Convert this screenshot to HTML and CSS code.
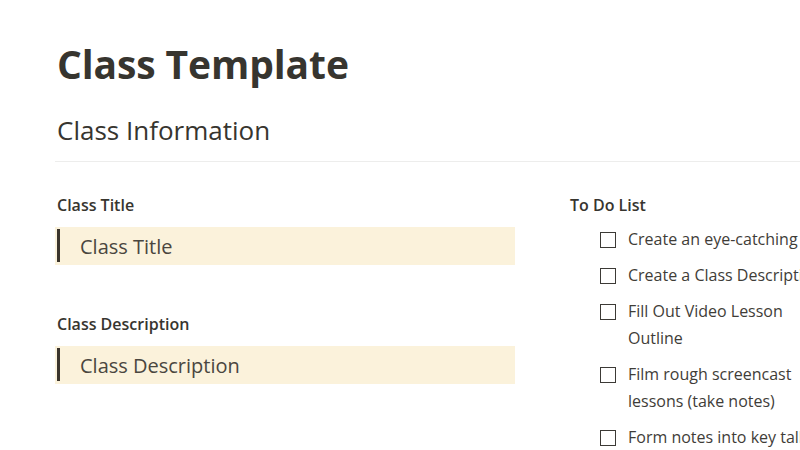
FILE: index.html
```html
<!DOCTYPE html>
<html>
<head>
<meta charset="utf-8">
<link rel="stylesheet" href="styles.css">
</head>
<body>
<div class="page">
  <h1 class="title">Class Template</h1>
  <h2 class="section">Class Information</h2>
  <div class="columns">
    <div class="left">
      <div class="label">Class Title</div>
      <div class="callout"><div class="callout-inner">Class Title</div></div>
      <div class="label label-gap">Class Description</div>
      <div class="callout"><div class="callout-inner">Class Description</div></div>
    </div>
    <div class="right">
      <div class="label label-right">To Do List</div>
      <ul class="todo">
        <li><span class="box"></span><span class="txt">Create an eye-catching</span></li>
        <li><span class="box"></span><span class="txt">Create a Class Description</span></li>
        <li><span class="box"></span><span class="txt">Fill Out Video Lesson Outline</span></li>
        <li><span class="box"></span><span class="txt">Film rough screencast lessons (take notes)</span></li>
        <li><span class="box"></span><span class="txt">Form notes into key talking points</span></li>
      </ul>
    </div>
  </div>
</div>
</body>
</html>
```

FILE: styles.css
```css
html, body {
  margin: 0;
  padding: 0;
  background: #ffffff;
  overflow: hidden;
}
body {
  width: 800px;
  height: 450px;
  font-family: "Open Sans", "Noto Sans", sans-serif;
  color: #37352f;
}
.page {
  width: 900px;
  padding: 41px 0 0 55px;
}
.title {
  margin: 0 0 0 2px;
  font-size: 39px;
  line-height: 46px;
  font-weight: 700;
  letter-spacing: -0.1px;
}
.section {
  margin: 27px 0 0 0;
  padding: 0 0 14px 2px;
  font-size: 26px;
  line-height: 33px;
  font-weight: 400;
  border-bottom: 1px solid #ededec;
}
.columns {
  display: grid;
  grid-template-columns: 460px 273px;
  column-gap: 55px;
  padding-top: 33px;
}
.label {
  margin-left: 2px;
  font-size: 16px;
  line-height: 20px;
  font-weight: 600;
}
.label-right {
  margin-left: 0;
}
.label-gap {
  margin-top: 49px;
}
.callout {
  margin-top: 12px;
  background: #fbf2db;
  padding: 2px 0 3px 2px;
}
.callout-inner {
  border-left: 3px solid #3a342c;
  padding: 4px 0 1px 20px;
  font-size: 20px;
  line-height: 28px;
  color: #4a463f;
}
.todo {
  list-style: none;
  margin: 11px 0 0 0;
  padding: 0 0 0 30px;
}
.todo li {
  display: flex;
  align-items: flex-start;
  gap: 12px;
  margin-bottom: 9px;
  font-size: 16px;
  line-height: 27px;
  color: #3f3d38;
}
.box {
  flex: none;
  width: 16px;
  height: 16px;
  margin-top: 6px;
  box-sizing: border-box;
  border: 1.5px solid #3c3a36;
}
.txt {
  width: 208px;
}
```
